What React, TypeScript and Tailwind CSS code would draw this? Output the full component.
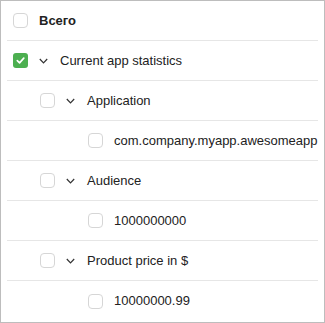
const ROWS = [
  { label: "Current app statistics", pad: "pl-3", group: true, checked: true },
  { label: "Application", pad: "pl-[39px]", group: true },
  { label: "com.company.myapp.awesomeapp", pad: "pl-[87px]" },
  { label: "Audience", pad: "pl-[39px]", group: true },
  { label: "1000000000", pad: "pl-[87px]" },
  { label: "Product price in $", pad: "pl-[39px]", group: true },
  { label: "10000000.99", pad: "pl-[87px]" },
];

function Checkbox({ checked }: { checked?: boolean }) {
  if (checked) {
    return (
      <div className="w-[15px] h-[15px] rounded-[3px] bg-[#4caf50] flex items-center justify-center shrink-0">
        <svg width="11" height="11" viewBox="0 0 12 12" fill="none">
          <path d="M2.5 6.2 L5 8.6 L9.6 3.4" stroke="white" strokeWidth="1.8" strokeLinecap="round" strokeLinejoin="round" />
        </svg>
      </div>
    );
  }
  return <div className="w-[15px] h-[15px] rounded-[4px] border border-[#d6d6d6] bg-white shrink-0" />;
}

function Chevron() {
  return (
    <svg width="9" height="6" viewBox="0 0 9 6" fill="none" className="shrink-0">
      <path d="M0.8 1 L4.5 4.8 L8.2 1" stroke="#333" strokeWidth="1.2" />
    </svg>
  );
}

export default function App() {
  return (
    <div
      className="w-[325px] h-[323px] border border-[#bdbdbd] bg-white text-[13px] text-[#222] overflow-hidden"
      style={{ fontFamily: '"Liberation Sans", Arial, sans-serif' }}
    >
      {/* header */}
      <div className="mx-[6px] h-[40px] border-b border-[#e6e6e6] flex items-center pl-[6px]">
        <Checkbox />
        <span className="ml-[11px] font-bold">Всего</span>
      </div>

      {ROWS.map((r, i) => (
        <div
          key={r.label}
          className={`mx-[6px] h-[40px] flex items-center ${i < ROWS.length - 1 ? "border-b border-[#e6e6e6]" : ""}`}
        >
          <div className={`flex items-center ${r.pad} -ml-[6px]`}>
            <Checkbox checked={r.checked} />
            {r.group ? (
              <>
                <span className="ml-[11px]"><Chevron /></span>
                <span className="ml-[12px]">{r.label}</span>
              </>
            ) : (
              <span className="ml-[11px]">{r.label}</span>
            )}
          </div>
        </div>
      ))}
    </div>
  );
}
